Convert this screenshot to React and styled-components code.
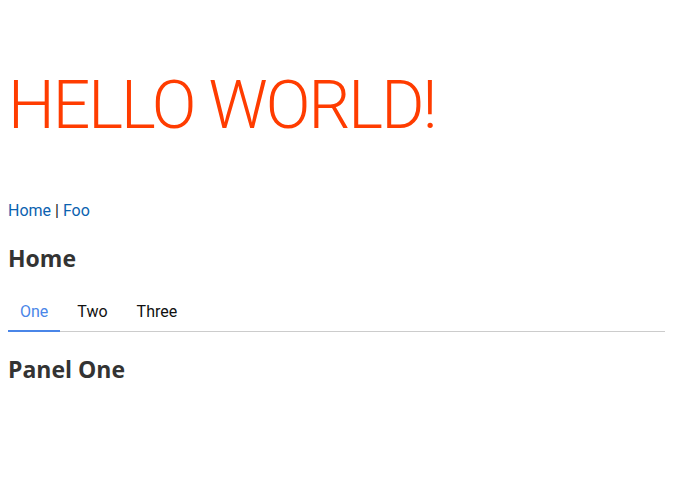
import React, { useState } from "react";
import styled, { createGlobalStyle } from "styled-components";

const GlobalStyle = createGlobalStyle`
  body {
    margin: 8px;
    font-family: Roboto, "Liberation Sans", sans-serif;
    color: #333;
    background: #fff;
  }
`;

const tabs = [
  { id: "one", label: "One", panel: "Panel One" },
  { id: "two", label: "Two", panel: "Panel Two" },
  { id: "three", label: "Three", panel: "Panel Three" },
];

const App = () => {
  const [active, setActive] = useState("one");
  const current = tabs.find((t) => t.id === active);

  return (
    <>
      <GlobalStyle />
      <Title>HELLO WORLD!</Title>
      <Nav>
        <NavLink href="#">Home</NavLink> | <NavLink href="#">Foo</NavLink>
      </Nav>
      <Heading>Home</Heading>
      <TabList>
        {tabs.map((t) => (
          <Tab key={t.id} $active={t.id === active} onClick={() => setActive(t.id)}>
            {t.label}
          </Tab>
        ))}
      </TabList>
      <Panel>
        <Heading>{current.panel}</Heading>
      </Panel>
    </>
  );
};

export default App;

const Title = styled.h1`
  margin: 58px 0 55px;
  font-size: 66px;
  font-weight: 300;
  line-height: 1.2;
  letter-spacing: -2px;
  color: #ff3c00;
`;

const Nav = styled.nav`
  font-size: 16px;
  line-height: 22px;
  color: #222;
`;

const NavLink = styled.a`
  color: #0b62b0;
  text-decoration: none;
`;

const Heading = styled.h2`
  margin: 21px 0 20px;
  font-family: "Open Sans", Roboto, sans-serif;
  font-size: 23px;
  font-weight: 700;
  line-height: 30px;
  color: #333;
`;

const TabList = styled.div`
  display: flex;
  gap: 5px;
  margin-top: 23px;
  border-bottom: 1px solid #ccc;
`;

const Tab = styled.button`
  padding: 6px 12px 9px;
  border: none;
  border-bottom: 2px solid ${(p) => (p.$active ? "#4a86e8" : "transparent")};
  margin-bottom: -1px;
  background: none;
  font-family: inherit;
  font-size: 16px;
  color: ${(p) => (p.$active ? "#4a86e8" : "#111")};
  cursor: pointer;
`;

const Panel = styled.section`
  padding-top: 1px;
`;
